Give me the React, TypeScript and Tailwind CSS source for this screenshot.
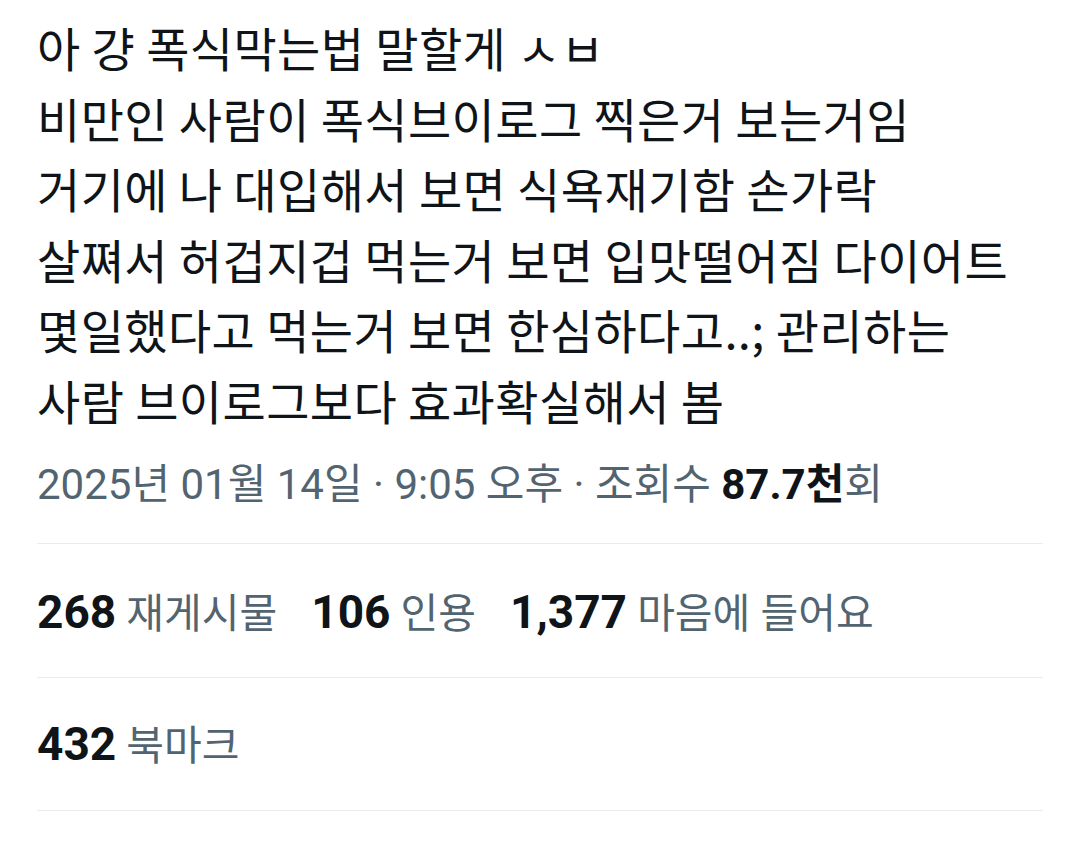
export default function App() {
  const lines = [
    "아 걍 폭식막는법 말할게 ㅅㅂ",
    "비만인 사람이 폭식브이로그 찍은거 보는거임",
    "거기에 나 대입해서 보면 식욕재기함 손가락",
    "살쪄서 허겁지겁 먹는거 보면 입맛떨어짐 다이어트",
    "몇일했다고 먹는거 보면 한심하다고..; 관리하는",
    "사람 브이로그보다 효과확실해서 봄",
  ];

  const stats = [
    { n: "268", label: "재게시물" },
    { n: "106", label: "인용" },
    { n: "1,377", label: "마음에 들어요" },
  ];

  return (
    <div
      className="min-h-screen w-[1080px] bg-white px-[37px] text-[#0f1419]"
      style={{ fontFamily: '"Noto Sans CJK KR", "Noto Sans", sans-serif' }}
    >
      {/* Tweet body */}
      <div className="pt-[12px] text-[47px] leading-[70.5px] tracking-[0.4px]">
        {lines.map((line, i) => (
          <div key={i}>{line}</div>
        ))}
      </div>

      {/* Timestamp */}
      <div
        className="mt-[26px] pb-[34px] text-[42px] leading-[48px] text-[#536471]"
        style={{ fontFamily: 'Roboto, "Noto Sans CJK KR", sans-serif' }}
      >
        2025년 01월 14일 · 9:05 오후 · 조회수{" "}
        <span className="font-bold text-[#0f1419]">87.7천</span>회
      </div>

      {/* Stats */}
      <div
        className="flex items-center gap-[34px] border-t border-[#e7ecee] pt-[44px] pb-[39px] text-[41px] leading-[48px]"
        style={{ fontFamily: 'Roboto, "Noto Sans CJK KR", sans-serif' }}
      >
        {stats.map((s) => (
          <span key={s.label}>
            <span className="text-[46px] font-bold">{s.n}</span>{" "}
            <span className="text-[#536471]">{s.label}</span>
          </span>
        ))}
      </div>

      <div
        className="border-y border-[#e7ecee] pt-[42px] pb-[40px] text-[41px] leading-[48px]"
        style={{ fontFamily: 'Roboto, "Noto Sans CJK KR", sans-serif' }}
      >
        <span className="text-[46px] font-bold">432</span>{" "}
        <span className="text-[#536471]">북마크</span>
      </div>
    </div>
  );
}
